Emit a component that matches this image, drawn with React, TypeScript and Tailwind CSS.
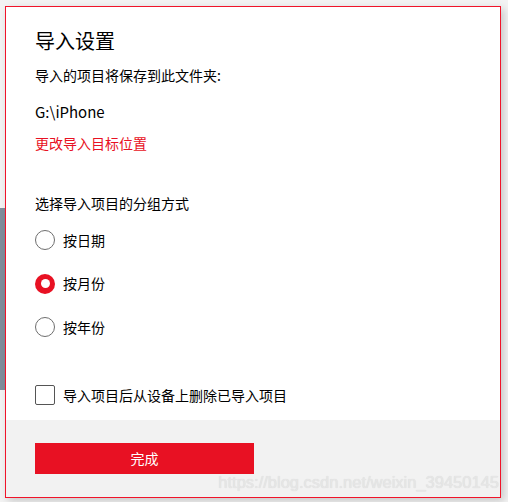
import React from "react";

const font = { fontFamily: '"Noto Sans CJK SC", "Noto Sans", sans-serif' };

const options = ["按日期", "按月份", "按年份"];

const Radio = ({ checked }: { checked: boolean }) =>
  checked ? (
    <span className="flex h-5 w-5 items-center justify-center rounded-full bg-[#e81123]">
      <span className="h-[9px] w-[9px] rounded-full bg-white" />
    </span>
  ) : (
    <span className="h-5 w-5 rounded-full border-[1.5px] border-[#6e6e6e] bg-white" />
  );

export default function App() {
  const selected = 1;
  return (
    <div className="relative h-[502px] w-[508px] overflow-hidden bg-[#f3f3f3] pl-[5px] pt-[6px]" style={font}>
      {/* window behind the dialog */}
      <div className="absolute left-0 top-[208px] h-[182px] w-[5px] bg-[#7f8e9c]" />

      <div className="relative flex h-[492px] w-[496px] flex-col border border-[#f0142a] bg-white shadow-[3px_3px_8px_rgba(0,0,0,0.18)]">
        <div className="flex flex-col pl-[29px] pt-[20px] text-black">
          <h1 className="text-[20px] leading-[28px]">导入设置</h1>
          <p className="mt-[10px] text-[14px] leading-[20px]">导入的项目将保存到此文件夹:</p>
          <p className="mt-[17px] text-[15px] leading-[20px]">G:\iPhone</p>
          <p className="mt-[11px] text-[14px] leading-[20px] text-[#e81123]">更改导入目标位置</p>

          <p className="mt-[40px] text-[14px] leading-[20px]">选择导入项目的分组方式</p>
          <div className="mt-[17px] flex flex-col gap-[23.5px]">
            {options.map((o, i) => (
              <div key={o} className="flex h-5 items-center gap-[8px] text-[14px]">
                <Radio checked={i === selected} />
                <span>{o}</span>
              </div>
            ))}
          </div>

          <div className="mt-[48px] flex h-5 items-center gap-[8px] text-[14px]">
            <span className="h-5 w-5 rounded-[2px] border border-[#555] bg-white" />
            <span>导入项目后从设备上删除已导入项目</span>
          </div>
        </div>

        <div className="mt-[15px] flex-1 bg-[#f2f2f2] pl-[29px] pt-[23px]">
          <button className="h-[31px] w-[219px] bg-[#e81123] text-[14px] text-white">完成</button>
        </div>

        <span
          className="pointer-events-none absolute bottom-[5px] right-[1px] text-[16.5px] leading-[20px] text-[#e6e6e6] [text-shadow:0_0_1px_rgba(0,0,0,0.12)]"
          style={{ fontFamily: '"Liberation Sans", Arial, sans-serif' }}
        >
          https://blog.csdn.net/weixin_39450145
        </span>
      </div>
    </div>
  );
}
